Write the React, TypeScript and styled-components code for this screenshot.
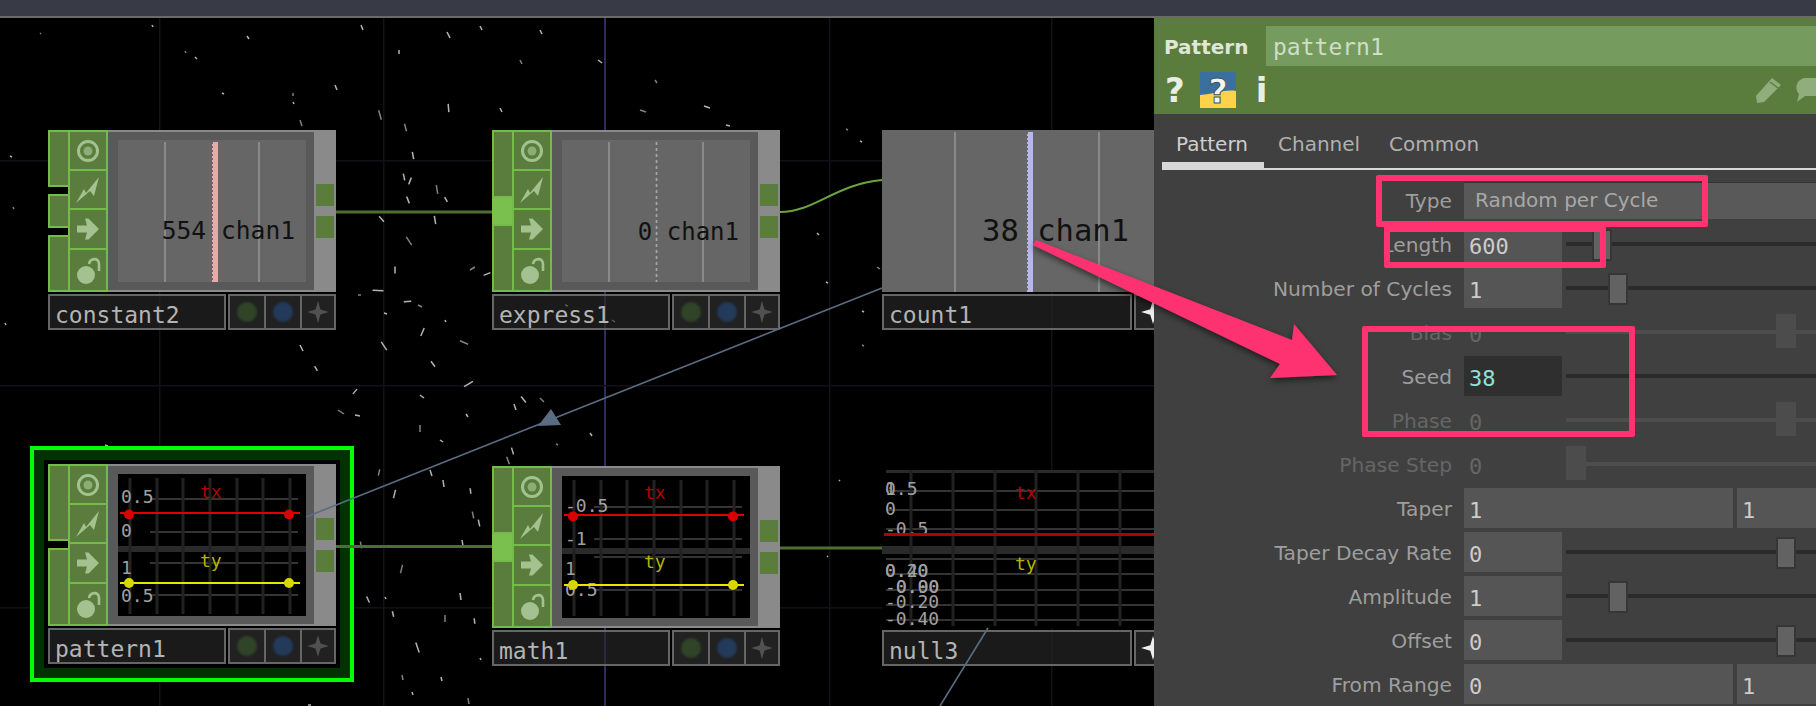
import React from "react";
import styled, { createGlobalStyle } from "styled-components";

const MONO = `"DejaVu Sans Mono", "Liberation Mono", monospace`;
const SANS = `"DejaVu Sans", "Liberation Sans", sans-serif`;
const GREEN = "#5a7d3e";
const GREEN_EDGE = "#74bb4a";
const ICON = "#a3c28f";
const PINK = "#fe3370";

const Global = createGlobalStyle`
  html, body { margin: 0; padding: 0; background: #000; }
  body { font-family: ${SANS}; }
`;

const Screen = styled.div`
  position: relative;
  width: 1816px;
  height: 706px;
  overflow: hidden;
  display: flex;
  flex-direction: column;
  background: #000;
`;
const TopBar = styled.div`
  flex: none;
  height: 16px;
  background: #383b45;
  border-bottom: 2px solid #6a6a6a;
`;
const Workspace = styled.div`
  flex: 1;
  display: flex;
  min-height: 0;
`;
const Canvas = styled.div`
  position: relative;
  flex: none;
  width: 1154px;
  overflow: hidden;
  background: #000;
`;
const Layer = styled.svg`
  position: absolute;
  left: 0;
  top: -18px;
  width: 1154px;
  height: 706px;
`;
const WireLayer = styled(Layer)`
  pointer-events: none;
`;

/* node graph */
const NodeSpot = styled.div<{ $x: number; $y: number }>`
  position: absolute;
  left: ${(p) => p.$x}px;
  top: ${(p) => p.$y - 18}px;
`;
const Selection = styled.div`
  position: absolute;
  left: 30px;
  top: ${446 - 18}px;
  border: 4px solid #00ff00;
  background: #003300;
  padding: 10px;
`;
const SelectionInner = styled.div`
  background: #000;
  padding: 4px;
`;
const NodeBody = styled.div<{ $w: number }>`
  display: flex;
  flex-direction: column;
  gap: 2px;
  width: ${(p) => p.$w}px;
`;
const Tile = styled.div<{ $h: number }>`
  display: flex;
  height: ${(p) => p.$h}px;
`;
const Inputs = styled.div<{ $gap: number }>`
  flex: none;
  width: 22px;
  margin-right: -2px;
  display: flex;
  flex-direction: column;
  gap: ${(p) => p.$gap}px;
`;
const Input = styled.div<{ $h: number; $active?: boolean }>`
  box-sizing: border-box;
  height: ${(p) => p.$h}px;
  border: 2px solid ${GREEN_EDGE};
  border-width: ${(p) => (p.$active ? "0" : "2px")};
  background: ${(p) => (p.$active ? "#7ac04f" : GREEN)};
`;
const Buttons = styled.div`
  flex: none;
  width: 40px;
  display: grid;
  grid-template-rows: 41px 39px 40px 42px;
`;
const TileButton = styled.div`
  display: flex;
  align-items: center;
  justify-content: center;
  margin-top: -2px;
  background: ${GREEN};
  border: 2px solid ${GREEN_EDGE};
  &:first-child { margin-top: 0; }
`;
const Viewer = styled.div`
  flex: 1;
  min-width: 0;
  box-sizing: border-box;
  padding: 8px 8px 8px 10px;
  background: #595959;
  border-top: 2px solid #8a8a8a;
  border-bottom: 2px solid #8a8a8a;
`;
const Outputs = styled.div`
  flex: none;
  width: 22px;
  box-sizing: border-box;
  padding-top: 54px;
  background: #8a8a8a;
  display: flex;
  flex-direction: column;
  align-items: center;
  gap: 10px;
`;
const Output = styled.div`
  width: 18px;
  height: 22px;
  background: ${GREEN};
`;
const ValuePlot = styled.div`
  position: relative;
  flex: 1;
  height: 100%;
  background: #666;
  display: flex;
  justify-content: flex-end;
  align-items: flex-end;
`;
const PlotLines = styled.svg`
  position: absolute;
  left: 0;
  top: 0;
  width: 100%;
  height: 100%;
`;
const ValueText = styled.span<{ $size: number; $right: number; $bottom: number }>`
  position: relative;
  font-family: ${MONO};
  font-size: ${(p) => p.$size}px;
  line-height: 1;
  white-space: pre;
  color: #111;
  margin-right: ${(p) => p.$right}px;
  margin-bottom: ${(p) => p.$bottom}px;
`;
const BareGraph = styled.div<{ $w?: number }>`
  height: 100%;
  width: ${(p) => (p.$w ? `${p.$w}px` : "auto")};
`;
const GraphSvg = styled.svg`
  display: block;
  width: 100%;
  height: 100%;
  background: #000;
  text { font-family: ${MONO}; font-size: 18px; }
`;
const NameRow = styled.div`
  display: flex;
  gap: 2px;
  height: 36px;
`;
const NameBar = styled.div<{ $w: number }>`
  box-sizing: border-box;
  flex: none;
  width: ${(p) => p.$w}px;
  border: 2px solid #666;
  background: rgba(40, 40, 40, 0.65);
  padding-left: 5px;
  font-family: ${MONO};
  font-size: 23px;
  line-height: 38px;
  color: #b4b4b4;
  white-space: nowrap;
  overflow: hidden;
`;
const Cells = styled.div`
  flex: 1;
  display: flex;
`;
const Cell = styled.div<{ $w: number }>`
  box-sizing: border-box;
  flex: none;
  width: ${(p) => p.$w}px;
  margin-left: -2px;
  display: flex;
  align-items: center;
  justify-content: center;
  border: 2px solid #666;
  background: rgba(60, 60, 60, 0.55);
  &:first-child { margin-left: 0; }
`;
const Lamp = styled.div<{ $color: string }>`
  width: 20px;
  height: 20px;
  border-radius: 50%;
  background: ${(p) => p.$color};
  filter: blur(0.8px);
`;

/* parameter panel */
const Panel = styled.div`
  flex: 1;
  min-width: 0;
  display: flex;
  flex-direction: column;
  overflow: hidden;
  background: #404040;
`;
const Header = styled.div`
  flex: none;
  height: 96px;
  box-sizing: border-box;
  padding-top: 8px;
  background: ${GREEN};
`;
const TitleRow = styled.div`
  display: flex;
  align-items: center;
  height: 40px;
`;
const Title = styled.div`
  flex: none;
  width: 112px;
  padding-top: 2px;
  padding-left: 10px;
  box-sizing: border-box;
  font-family: ${SANS};
  font-weight: 700;
  font-size: 20px;
  color: #dfe8d8;
`;
const NameField = styled.div`
  flex: 1;
  height: 40px;
  padding-left: 7px;
  background: #769b5e;
  font-family: ${MONO};
  font-size: 23px;
  line-height: 43px;
  color: #d0dec6;
`;
const ToolRow = styled.div`
  display: flex;
  align-items: center;
  height: 36px;
  margin-top: 6px;
  padding-left: 11px;
`;
const ToolGlyph = styled.span<{ $gap: number; $lead?: number }>`
  flex: none;
  margin-left: ${(p) => p.$lead ?? 0}px;
  margin-right: ${(p) => p.$gap}px;
  font-family: ${SANS};
  font-weight: 700;
  font-size: 34px;
  line-height: 36px;
  color: #e8efe2;
`;
const ToolSpacer = styled.div`
  flex: 1;
`;
const Tabs = styled.div`
  flex: none;
  height: 56px;
  box-sizing: border-box;
  margin-left: 8px;
  display: flex;
  border-bottom: 2px solid #d8d8d8;
`;
const Tab = styled.div<{ $w: number; $active?: boolean }>`
  flex: none;
  box-sizing: border-box;
  width: ${(p) => p.$w}px;
  height: 54px;
  padding-left: 14px;
  font-size: 20px;
  line-height: 61px;
  color: ${(p) => (p.$active ? "#cfcfcf" : "#b0b0b0")};
  border-bottom: ${(p) => (p.$active ? "6px solid #d8d8d8" : "0")};
`;
const Rows = styled.div`
  padding-top: 10px;
  display: flex;
  flex-direction: column;
  gap: 4px;
`;
const Row = styled.div`
  display: flex;
  align-items: center;
  height: 40px;
`;
const Label = styled.div<{ $off?: boolean }>`
  flex: none;
  width: 298px;
  padding-top: 2px;
  text-align: right;
  margin-right: 12px;
  font-size: 20.2px;
  white-space: nowrap;
  color: ${(p) => (p.$off ? "#666" : "#9e9e9e")};
`;
const Field = styled.div<{ $kind?: "wide" | "narrow" | "seed" | "off" }>`
  flex: none;
  box-sizing: border-box;
  width: ${(p) => (p.$kind === "wide" ? "269px" : "98px")};
  height: 40px;
  padding-left: 5px;
  background: ${(p) => (p.$kind === "seed" ? "#2f2f2f" : p.$kind === "off" ? "transparent" : "#555")};
  color: ${(p) => (p.$kind === "seed" ? "#93e0d8" : p.$kind === "off" ? "#666" : "#cdcdcd")};
  font-family: ${MONO};
  font-size: 22px;
  line-height: 45px;
`;
const SecondField = styled(Field)`
  flex: 1;
  margin-left: 4px;
`;
const Menu = styled.div`
  flex: 1;
  height: 36px;
  padding-left: 11px;
  background: #595959;
  border-top: 1px solid #333;
  font-size: 20px;
  line-height: 35px;
  color: #a8a8a8;
`;
const Slider = styled.div<{ $off?: boolean }>`
  position: relative;
  flex: 1;
  height: 40px;
  margin-left: 4px;
  &::before {
    content: "";
    position: absolute;
    left: 0;
    right: 0;
    top: 18px;
    height: 4px;
    background: ${(p) => (p.$off ? "#4d4d4d" : "#2b2b2b")};
  }
`;
const Knob = styled.div<{ $x: number; $off?: boolean }>`
  position: absolute;
  box-sizing: border-box;
  left: ${(p) => p.$x}px;
  top: ${(p) => (p.$off ? 2 : 5)}px;
  width: 20px;
  height: ${(p) => (p.$off ? 34 : 32)}px;
  background: ${(p) => (p.$off ? "#4c4c4c" : "#626262")};
  border: ${(p) => (p.$off ? "0" : "2px solid #363636")};
`;
const EndIcon = styled.svg<{ $gap: number }>`
  flex: none;
  margin-right: ${(p) => p.$gap}px;
`;

/* annotations */
const PinkBox = styled.div<{ $x: number; $y: number; $w: number; $h: number }>`
  position: absolute;
  box-sizing: border-box;
  left: ${(p) => p.$x}px;
  top: ${(p) => p.$y}px;
  width: ${(p) => p.$w}px;
  height: ${(p) => p.$h}px;
  border: 6px solid ${PINK};
  border-radius: 2px;
`;
const ArrowSvg = styled.svg`
  position: absolute;
  left: 0;
  top: 0;
  width: 1816px;
  height: 706px;
  pointer-events: none;
`;

/* ---------- drawings ---------- */
const IconTarget = () => (
  <svg width="26" height="26" viewBox="0 0 26 26">
    <circle cx="13" cy="13" r="9.5" fill="none" stroke={ICON} strokeWidth="3" />
    <circle cx="13" cy="13" r="4.5" fill={ICON} opacity="0.7" />
  </svg>
);
const IconBolt = () => (
  <svg width="26" height="28" viewBox="0 0 26 28">
    <path d="M1 27 L9 13 L11 17 L24 1 L19 20 L15 15 Z" fill={ICON} />
  </svg>
);
const IconArrow = () => (
  <svg width="26" height="26" viewBox="0 0 26 26">
    <path d="M2 9.5 H12 L10 2.5 H13.5 L24 13 L13.5 23.5 H10 L12 16.5 H2 Z" fill={ICON} />
  </svg>
);
const IconLock = () => (
  <svg width="26" height="30" viewBox="0 0 26 30">
    <circle cx="11" cy="20" r="9" fill={ICON} />
    <path d="M14 9 C15 3 24 2 24 9 V16" fill="none" stroke={ICON} strokeWidth="2.6" />
  </svg>
);
const Star = ({ color, size = 22 }: { color: string; size?: number }) => (
  <svg width={size} height={size} viewBox="0 0 22 22">
    <path d="M11 0 L13.5 8.5 L22 11 L13.5 13.5 L11 22 L8.5 13.5 L0 11 L8.5 8.5 Z" fill={color} />
  </svg>
);

type Line = { y: number; x1: number; x2: number; dots?: number[] };
type GraphLabel = { t: string; x: number; y: number };
type GraphData = {
  w: number;
  h: number;
  v: number[];
  vTop: number;
  vBottom: number;
  hs: number[];
  hx1: number;
  hx2: number;
  band: [number, number];
  red: Line;
  yellow?: Line;
  labels: GraphLabel[];
  tx: [number, number];
  ty: [number, number];
  top?: boolean;
  redColor: string;
};

const Graph = ({ d }: { d: GraphData }) => (
  <GraphSvg viewBox={`0 0 ${d.w} ${d.h}`} preserveAspectRatio="xMinYMin slice">
    {d.top && <rect x="4" y="0" width={d.w} height="3" fill="#2a2a2a" />}
    {d.hs.map((y) => (
      <rect key={y} x={d.hx1} y={y - 1} width={d.hx2 - d.hx1} height="2" fill="#343434" />
    ))}
    <rect x="0" y={d.band[0]} width={d.w} height={d.band[1] - d.band[0]} fill="#2a2a2a" />
    {d.v.map((x) => (
      <rect key={x} x={x - 1.5} y={d.vTop} width="3" height={d.vBottom - d.vTop} fill="#222" />
    ))}
    {d.labels.map((l, i) => (
      <text key={i} x={l.x} y={l.y} fill="#a0a0a0">
        {l.t}
      </text>
    ))}
    <rect x={d.red.x1} y={d.red.y - 1} width={d.red.x2 - d.red.x1} height={d.top ? 3 : 2} fill={d.redColor} />
    {d.red.dots?.map((x) => (
      <circle key={x} cx={x} cy={d.red.y + 1.5} r="5" fill="#d80000" />
    ))}
    {d.yellow && (
      <rect x={d.yellow.x1} y={d.yellow.y - 1} width={d.yellow.x2 - d.yellow.x1} height="2" fill="#e6e600" />
    )}
    {d.yellow?.dots?.map((x) => (
      <circle key={x} cx={x} cy={d.yellow!.y} r="5" fill="#d8d800" />
    ))}
    <text x={d.tx[0]} y={d.tx[1]} fill="#b00000">tx</text>
    <text x={d.ty[0]} y={d.ty[1]} fill="#b4b400">ty</text>
  </GraphSvg>
);

const V_LINES = [12, 39, 65, 92, 119, 145, 172];

const patternGraph: GraphData = {
  w: 188, h: 142, v: V_LINES, vTop: 4, vBottom: 140,
  hs: [25, 58, 89, 121], hx1: 32, hx2: 180, band: [72, 78],
  red: { y: 39, x1: 2, x2: 182, dots: [11, 171] },
  yellow: { y: 109, x1: 2, x2: 182, dots: [11, 171] },
  labels: [
    { t: "0.5", x: 3, y: 29 }, { t: "0", x: 3, y: 63 },
    { t: "1", x: 3, y: 100 }, { t: "0.5", x: 3, y: 128 },
  ],
  tx: [82, 24], ty: [82, 93], redColor: "#e00000",
};
const mathGraph: GraphData = {
  ...patternGraph,
  hs: [31, 63, 81, 114],
  labels: [
    { t: "-0.5", x: 3, y: 36 }, { t: "-1", x: 3, y: 69 },
    { t: "1", x: 3, y: 99 }, { t: "0.5", x: 3, y: 120 },
  ],
  tx: [82, 23], ty: [82, 92],
};
const nullGraph: GraphData = {
  w: 272, h: 158, v: [29, 71, 113, 154, 196, 238], vTop: 0, vBottom: 156,
  hs: [21, 40, 59, 89, 104, 120, 135, 150], hx1: 4, hx2: 272, band: [76, 84],
  red: { y: 64, x1: 2, x2: 272 },
  labels: [
    { t: "0.5", x: 3, y: 25 }, { t: "1", x: 3, y: 25 }, { t: "0", x: 3, y: 45 }, { t: "-0.5", x: 3, y: 65 },
    { t: "0.40", x: 3, y: 107 }, { t: "0.20", x: 3, y: 107 }, { t: "-0.00", x: 3, y: 123 }, { t: "0.90", x: 14, y: 123 },
    { t: "-0.20", x: 3, y: 138 }, { t: "-0.40", x: 3, y: 155 },
  ],
  tx: [133, 29], ty: [133, 100], top: true, redColor: "#b00000",
};

const ValueLines = ({ line, w, h, a, b, c }: { line?: string; w: number; h: number; a: number; b: number; c: number }) => (
  <PlotLines viewBox={`0 0 ${w} ${h}`} preserveAspectRatio="none">
    <rect x={a} y="2" width="2" height={h - 2} fill="#8a8a8a" />
    <rect x={b} y="2" width="2" height={h - 2} fill="#8a8a8a" />
    {line ? (
      <>
        <rect x={c} y="2" width="6" height={h - 2} fill={line} />
        <line x1={c} x2={c} y1="2" y2={h} stroke="#666" strokeWidth="2" strokeDasharray="2 2" />
      </>
    ) : (
      <line x1={c} x2={c} y1="2" y2={h} stroke="#a8a8a8" strokeWidth="1.6" strokeDasharray="3 3" />
    )}
  </PlotLines>
);

const InputStack = ({ kind }: { kind: "three" | "two" | "wired" }) => {
  if (kind === "three")
    return (
      <Inputs $gap={7}>
        <Input $h={57} />
        <Input $h={34} />
        <Input $h={57} />
      </Inputs>
    );
  if (kind === "two")
    return (
      <Inputs $gap={7}>
        <Input $h={77} />
        <Input $h={78} />
      </Inputs>
    );
  return (
    <Inputs $gap={0}>
      <Input $h={68} />
      <Input $h={26} $active />
      <Input $h={68} />
    </Inputs>
  );
};

const TileFrame = ({ inputs, children }: { inputs: "three" | "two" | "wired"; children: React.ReactNode }) => (
  <Tile $h={162}>
    <InputStack kind={inputs} />
    <Buttons>
      <TileButton><IconTarget /></TileButton>
      <TileButton><IconBolt /></TileButton>
      <TileButton><IconArrow /></TileButton>
      <TileButton><IconLock /></TileButton>
    </Buttons>
    <Viewer>{children}</Viewer>
    <Outputs>
      <Output />
      <Output />
    </Outputs>
  </Tile>
);

const FullNameRow = ({ name }: { name: string }) => (
  <NameRow>
    <NameBar $w={178}>{name}</NameBar>
    <Cells>
      <Cell $w={38}><Lamp $color="#304428" /></Cell>
      <Cell $w={38}><Lamp $color="#233a5a" /></Cell>
      <Cell $w={36}><Star color="#505050" /></Cell>
    </Cells>
  </NameRow>
);
const WideNameRow = ({ name }: { name: string }) => (
  <NameRow>
    <NameBar $w={250}>{name}</NameBar>
    <Cells>
      <Cell $w={38}><Star color="#eeeeee" size={24} /></Cell>
    </Cells>
  </NameRow>
);

/* ---------- data ---------- */
const SPECKS: number[][] = [
  [40,33,41,34],[152,25,153,27],[247,36,249,39],[185,51,186,53],[195,57,197,59],[222,93,224,94],[293,93,293,96],[293,102,294,104],
  [361,25,363,30],[378,108,382,122],[399,50,399,54],[10,156,12,157],[13,207,14,209],[378,215,385,223],[5,323,6,325],[358,295,361,295],
  [370,290,386,291],[384,313,387,314],[280,329,284,329],[105,445,108,446],[47,480,49,481],[380,468,378,477],[396,488,393,500],
  [352,498,350,506],[340,590,342,591],[366,595,370,604],[385,597,386,599],[308,676,310,677],[308,705,311,705],
  [448,102,449,114],[404,122,407,133],[412,150,414,161],[403,172,405,182],[436,183,438,196],[444,196,448,203],[434,214,436,226],
  [405,235,413,247],[406,195,410,205],[412,176,408,186],[470,270,475,267],[482,276,492,272],[402,302,413,301],[418,305,422,307],
  [425,326,420,338],[445,320,446,322],[436,0,440,4],[447,32,450,38],[480,26,482,30],[520,60,522,64],[500,108,502,112],
  [511,446,514,456],[506,455,510,466],[443,480,444,487],[470,487,471,495],[472,510,474,520],[478,518,480,528],[462,540,463,546],
  [403,563,400,575],[460,593,461,600],[474,617,475,625],[402,675,403,680],[441,677,442,681],[412,692,413,695],[468,698,469,704],
  [480,658,481,660],[590,433,592,436],[556,444,558,445],[514,404,516,410],[520,395,527,404],[540,398,544,402],[466,414,468,417],
  [430,360,436,368],[458,340,470,345],[462,388,475,380],[420,395,424,398],[572,250,574,252],[622,270,630,275],[612,320,615,322],
  [640,110,646,112],[704,106,710,108],[726,125,730,126],[846,129,848,130],[860,141,862,142],[817,233,819,235],[877,267,880,269],
  [826,282,828,283],[862,311,864,312],[862,345,864,346],[839,480,840,481],[827,556,828,557],[873,0,876,0],[314,365,318,372],
  [352,395,358,388],[332,250,333,252],[395,265,395,275],[300,345,303,351],[338,410,344,414],[380,340,388,352],[355,415,360,416],
  [420,425,420,432],[430,470,432,476],[440,440,443,442],[360,540,362,550],[392,610,394,618],[415,640,420,655],[445,615,445,622],
  [330,660,331,662],[565,305,568,306],[655,80,657,83],[598,60,602,63],[540,30,542,34],[300,120,302,126],[335,85,337,90],
];
const shorten = ([x1, y1, x2, y2]: number[]) => {
  const k = Math.hypot(x2 - x1, y2 - y1) > 8 ? 0.16 : 0;
  return [x1 + (x2 - x1) * k, y1 + (y2 - y1) * k, x2 - (x2 - x1) * k, y2 - (y2 - y1) * k];
};

const BLUE_WIRE = "#5a6c82";

export default function App() {
  return (
    <Screen>
      <Global />
      <TopBar />
      <Workspace>
        <Canvas>
          <Layer viewBox="0 0 1154 706">
            {[159, 383, 829, 1051].map((x) => (
              <rect key={x} x={x} y="18" width="1.5" height="688" fill="#12121a" />
            ))}
            <rect x="604" y="18" width="2" height="688" fill="#2c2c5e" />
            {[160, 385, 607].map((y) => (
              <rect key={y} x="0" y={y} width="1154" height="1.5" fill="#10101a" />
            ))}
            {SPECKS.map(shorten).map((s, i) => (
              <line
                key={i}
                x1={s[0]}
                y1={s[1]}
                x2={s[2]}
                y2={s[3]}
                stroke="#c8c8c8"
                strokeWidth="1.5"
                opacity={i % 3 === 0 ? 0.65 : 0.9}
              />
            ))}
          </Layer>

          <NodeSpot $x={48} $y={130}>
            <NodeBody $w={288}>
              <TileFrame inputs="three">
                <ValuePlot>
                  <ValueLines line="#e8a9a9" w={188} h={142} a={46} b={140} c={94} />
                  <ValueText $size={24.6} $right={11} $bottom={38}>554 chan1</ValueText>
                </ValuePlot>
              </TileFrame>
              <FullNameRow name="constant2" />
            </NodeBody>
          </NodeSpot>

          <NodeSpot $x={492} $y={130}>
            <NodeBody $w={288}>
              <TileFrame inputs="wired">
                <ValuePlot>
                  <ValueLines w={188} h={142} a={46} b={140} c={94.5} />
                  <ValueText $size={24} $right={11} $bottom={38}>0 chan1</ValueText>
                </ValuePlot>
              </TileFrame>
              <FullNameRow name="express1" />
            </NodeBody>
          </NodeSpot>

          <NodeSpot $x={882} $y={130}>
            <NodeBody $w={300}>
              <Tile $h={162}>
                <ValuePlot>
                  <ValueLines line="#b6b6ea" w={300} h={162} a={72} b={216} c={145} />
                  <ValueText $size={30.5} $right={53} $bottom={46}>38 chan1</ValueText>
                </ValuePlot>
              </Tile>
              <WideNameRow name="count1" />
            </NodeBody>
          </NodeSpot>

          <Selection>
            <SelectionInner>
              <NodeBody $w={288}>
                <TileFrame inputs="two">
                  <BareGraph><Graph d={patternGraph} /></BareGraph>
                </TileFrame>
                <FullNameRow name="pattern1" />
              </NodeBody>
            </SelectionInner>
          </Selection>

          <NodeSpot $x={492} $y={466}>
            <NodeBody $w={288}>
              <TileFrame inputs="wired">
                <BareGraph><Graph d={mathGraph} /></BareGraph>
              </TileFrame>
              <FullNameRow name="math1" />
            </NodeBody>
          </NodeSpot>

          <NodeSpot $x={882} $y={470}>
            <NodeBody $w={300}>
              <Tile $h={158}>
                <BareGraph $w={272}><Graph d={nullGraph} /></BareGraph>
              </Tile>
              <WideNameRow name="null3" />
            </NodeBody>
          </NodeSpot>

          <WireLayer viewBox="0 0 1154 706">
            <line x1="336" y1="212" x2="492" y2="212" stroke="#4e6f33" strokeWidth="3" />
            <path d="M780 212 C 815 212, 835 184, 882 180" fill="none" stroke="#6aa33f" strokeWidth="2" />
            <line x1="336" y1="546.5" x2="492" y2="546.5" stroke="#4e6f33" strokeWidth="3" />
            <line x1="780" y1="548" x2="882" y2="548" stroke="#4e6f33" strokeWidth="3" />
            <line x1="306" y1="517" x2="882" y2="288" stroke={BLUE_WIRE} strokeWidth="1.6" />
            <polygon points="538,426 561,425 551,409" fill={BLUE_WIRE} />
            <line x1="988" y1="628" x2="940" y2="706" stroke={BLUE_WIRE} strokeWidth="1.6" />
          </WireLayer>
        </Canvas>

        <Panel>
          <Header>
            <TitleRow>
              <Title>Pattern</Title>
              <NameField>pattern1</NameField>
            </TitleRow>
            <ToolRow>
              <ToolGlyph $gap={15}>?</ToolGlyph>
              <svg width="36" height="36" viewBox="0 0 36 36">
                <rect width="36" height="36" fill="#ffd24a" />
                <path d="M0 0 H36 V19 C26 17 14 22 0 23 Z" fill="#3b6fa0" />
                <text
                  x="18"
                  y="31"
                  textAnchor="middle"
                  fontFamily={SANS}
                  fontWeight="700"
                  fontSize="34"
                  fill="#f4f4f4"
                  stroke="#3a5a50"
                  strokeWidth="1"
                >
                  ?
                </text>
              </svg>
              <ToolGlyph $gap={0} $lead={20}>i</ToolGlyph>
              <ToolSpacer />
              <EndIcon width="28" height="28" viewBox="0 0 28 28" $gap={12}>
                <path d="M2 20 L18 2 L27 9 L10 26 L3 27 Z" fill="#90ae7b" />
                <path d="M16 6 L24 12" stroke={GREEN} strokeWidth="1.5" />
              </EndIcon>
              <EndIcon width="28" height="28" viewBox="0 0 28 28" $gap={-6}>
                <path d="M10 2 H28 V20 H11 L3 26 L5 18 C1 14 1 5 10 2 Z" fill="#90ae7b" />
              </EndIcon>
            </ToolRow>
          </Header>

          <Tabs>
            <Tab $w={102} $active>Pattern</Tab>
            <Tab $w={111}>Channel</Tab>
            <Tab $w={120}>Common</Tab>
          </Tabs>

          <Rows>
            <Row>
              <Label>Type</Label>
              <Menu>Random per Cycle</Menu>
            </Row>
            <Row>
              <Label>Length</Label>
              <Field>600</Field>
              <Slider><Knob $x={26} /></Slider>
            </Row>
            <Row>
              <Label>Number of Cycles</Label>
              <Field>1</Field>
              <Slider><Knob $x={42} /></Slider>
            </Row>
            <Row>
              <Label $off>Bias</Label>
              <Field $kind="off">0</Field>
              <Slider $off><Knob $off $x={210} /></Slider>
            </Row>
            <Row>
              <Label>Seed</Label>
              <Field $kind="seed">38</Field>
              <Slider />
            </Row>
            <Row>
              <Label $off>Phase</Label>
              <Field $kind="off">0</Field>
              <Slider $off><Knob $off $x={210} /></Slider>
            </Row>
            <Row>
              <Label $off>Phase Step</Label>
              <Field $kind="off">0</Field>
              <Slider $off><Knob $off $x={0} /></Slider>
            </Row>
            <Row>
              <Label>Taper</Label>
              <Field $kind="wide">1</Field>
              <SecondField>1</SecondField>
            </Row>
            <Row>
              <Label>Taper Decay Rate</Label>
              <Field>0</Field>
              <Slider><Knob $x={210} /></Slider>
            </Row>
            <Row>
              <Label>Amplitude</Label>
              <Field>1</Field>
              <Slider><Knob $x={42} /></Slider>
            </Row>
            <Row>
              <Label>Offset</Label>
              <Field>0</Field>
              <Slider><Knob $x={210} /></Slider>
            </Row>
            <Row>
              <Label>From Range</Label>
              <Field $kind="wide">0</Field>
              <SecondField>1</SecondField>
            </Row>
          </Rows>
        </Panel>
      </Workspace>

      <PinkBox $x={1376} $y={175} $w={332} $h={52} />
      <PinkBox $x={1384} $y={226} $w={222} $h={42} />
      <PinkBox $x={1362} $y={326} $w={273} $h={111} />
      <ArrowSvg viewBox="0 0 1816 706">
        <defs>
          <filter id="arrowShadow" x="-10%" y="-10%" width="120%" height="130%">
            <feDropShadow dx="0" dy="3" stdDeviation="3" floodColor="#000" floodOpacity="0.55" />
          </filter>
        </defs>
        <polygon
          points="1036,240 1292,340 1294,324 1337,375 1270,378 1280,364 1033,245"
          fill={PINK}
          filter="url(#arrowShadow)"
        />
      </ArrowSvg>
    </Screen>
  );
}
